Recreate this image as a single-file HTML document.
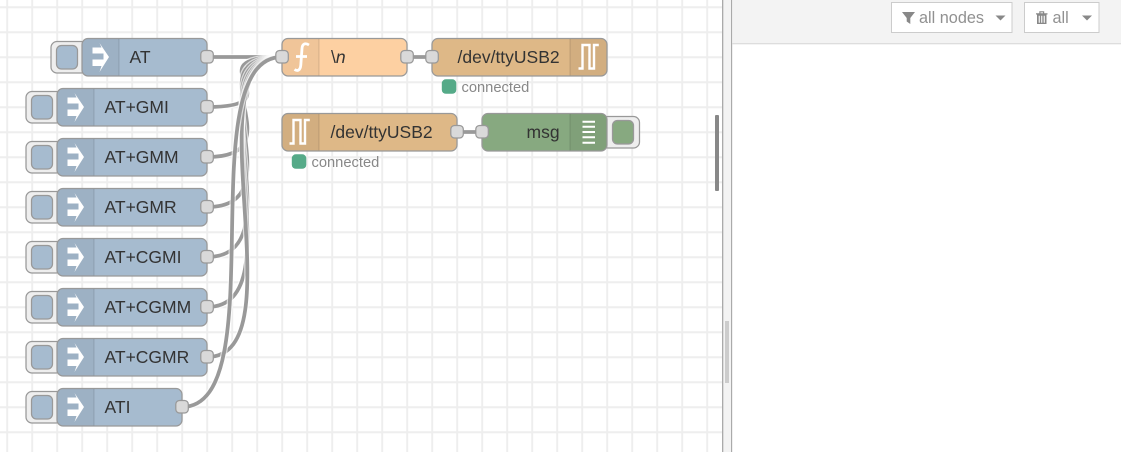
<!DOCTYPE html>
<html><head><meta charset="utf-8"><style>
html,body{margin:0;padding:0;background:#fff;width:1121px;height:452px;overflow:hidden}
svg{display:block;position:absolute;left:0;top:0}
text{font-family:"Liberation Sans",Arial,sans-serif}
.l{font-size:17.5px;fill:#333}
.s{font-size:14.7px;fill:#888}
.b{font-size:16.25px;fill:#919191}
.n{stroke:#999;stroke-width:1.25}
.p{fill:#d9d9d9;stroke:#999;stroke-width:1.25}
.ib{fill:#000;fill-opacity:.05}
.ic{stroke:#000;stroke-opacity:.1;stroke-width:1.25}
.o{fill:none;stroke:#fff;stroke-opacity:.65;stroke-width:6.25}
.w{fill:none;stroke:#999;stroke-width:3.75}
</style></head><body>
<svg width="1121" height="452" viewBox="0 0 1121 452" xmlns="http://www.w3.org/2000/svg">
<defs>
<pattern id="g" width="25" height="25" patternUnits="userSpaceOnUse" x="0" y="0">
<path d="M7.2 0V25M0 7.2H25" stroke="#eee" stroke-width="2" fill="none"/>
</pattern>
<g id="inj">
<path fill="#fff" d="M92.500 47.500H101.500L99.500 43L109 57L99.500 72L101.500 66H92.500V59.500H103.500V53.500H92.500Z"/>
</g>
<g id="btn">
<rect x="51" y="41.5" width="36" height="31.5" rx="6" fill="#eee" stroke="#999" stroke-width="1.25"/>
<rect x="56.5" y="45.5" width="21" height="23.5" rx="5" fill="#a6bbcf" stroke="#999" stroke-width="1.25"/>
</g>
<g id="hd">
<path class="ib" d="M88 39H119V75.5H88A5.5 5.5 0 0 1 82.5 70V44.500A5.500 5.500 0 0 1 88 39Z"/>
<path class="ic" d="M119 39V75.500"/>
<use href="#inj"/>
</g>
</defs>
<rect x="0" y="0" width="722" height="452" fill="#fff"/>
<rect x="0" y="0" width="722" height="452" fill="url(#g)"/>

<!-- wires -->
<g>
<path class="o" d="M207 57C301 57 188 57 282 57"/><path class="w" d="M207 57C301 57 188 57 282 57"/>
<path class="o" d="M207 107C301 107 188 57 282 57"/><path class="w" d="M207 107C301 107 188 57 282 57"/>
<path class="o" d="M207 157C301 157 188 57 282 57"/><path class="w" d="M207 157C301 157 188 57 282 57"/>
<path class="o" d="M207 207C301 207 188 57 282 57"/><path class="w" d="M207 207C301 207 188 57 282 57"/>
<path class="o" d="M207 257C301 257 188 57 282 57"/><path class="w" d="M207 257C301 257 188 57 282 57"/>
<path class="o" d="M207 307C301 307 188 57 282 57"/><path class="w" d="M207 307C301 307 188 57 282 57"/>
<path class="o" d="M207 357C301 357 188 57 282 57"/><path class="w" d="M207 357C301 357 188 57 282 57"/>
<path class="o" d="M182 407C276 407 188 57 282 57"/><path class="w" d="M182 407C276 407 188 57 282 57"/>
<path class="w" d="M407 57H432"/>
<path class="w" d="M457 132H482"/>
</g>

<!-- AT -->
<g>
<use href="#btn"/>
<rect class="n" x="82" y="38.5" width="125" height="37.5" rx="6" fill="#a6bbcf"/>
<use href="#hd"/>
<text class="l" x="129.500" y="63">AT</text>
<rect class="p" x="200.800" y="50.500" width="12.500" height="12.500" rx="3.750"/>
</g>
<g transform="translate(-25,50)">
<use href="#btn"/>
<rect class="n" x="82" y="38.5" width="150" height="37.5" rx="6" fill="#a6bbcf"/>
<use href="#hd"/>
<text class="l" x="129.500" y="63">AT+GMI</text>
<rect class="p" x="225.800" y="50.500" width="12.500" height="12.500" rx="3.750"/>
</g>
<g transform="translate(-25,100)">
<use href="#btn"/>
<rect class="n" x="82" y="38.5" width="150" height="37.5" rx="6" fill="#a6bbcf"/>
<use href="#hd"/>
<text class="l" x="129.500" y="63">AT+GMM</text>
<rect class="p" x="225.800" y="50.500" width="12.500" height="12.500" rx="3.750"/>
</g>
<g transform="translate(-25,150)">
<use href="#btn"/>
<rect class="n" x="82" y="38.5" width="150" height="37.5" rx="6" fill="#a6bbcf"/>
<use href="#hd"/>
<text class="l" x="129.500" y="63">AT+GMR</text>
<rect class="p" x="225.800" y="50.500" width="12.500" height="12.500" rx="3.750"/>
</g>
<g transform="translate(-25,200)">
<use href="#btn"/>
<rect class="n" x="82" y="38.5" width="150" height="37.5" rx="6" fill="#a6bbcf"/>
<use href="#hd"/>
<text class="l" x="129.500" y="63">AT+CGMI</text>
<rect class="p" x="225.800" y="50.500" width="12.500" height="12.500" rx="3.750"/>
</g>
<g transform="translate(-25,250)">
<use href="#btn"/>
<rect class="n" x="82" y="38.5" width="150" height="37.5" rx="6" fill="#a6bbcf"/>
<use href="#hd"/>
<text class="l" x="129.500" y="63">AT+CGMM</text>
<rect class="p" x="225.800" y="50.500" width="12.500" height="12.500" rx="3.750"/>
</g>
<g transform="translate(-25,300)">
<use href="#btn"/>
<rect class="n" x="82" y="38.5" width="150" height="37.5" rx="6" fill="#a6bbcf"/>
<use href="#hd"/>
<text class="l" x="129.500" y="63">AT+CGMR</text>
<rect class="p" x="225.800" y="50.500" width="12.500" height="12.500" rx="3.750"/>
</g>
<g transform="translate(-25,350)">
<use href="#btn"/>
<rect class="n" x="82" y="38.5" width="125" height="37.5" rx="6" fill="#a6bbcf"/>
<use href="#hd"/>
<text class="l" x="129.500" y="63">ATI</text>
<rect class="p" x="200.800" y="50.500" width="12.500" height="12.500" rx="3.750"/>
</g>

<!-- function -->
<rect class="n" x="282" y="38.500" width="125" height="37.500" rx="6" fill="#fdd0a2"/>
<path class="ib" d="M288 39H319V75.500H288A5.500 5.500 0 0 1 282.500 70V44.500A5.500 5.500 0 0 1 288 39Z"/>
<path class="ic" d="M319 39V75.500"/>
<path d="M309 45C305 42.500 302.300 44 302 48.500L300.800 65C300.300 70.500 297.500 71.500 294.500 69.500M296 56.500H307" fill="none" stroke="#fff" stroke-width="2.800"/>
<text class="l" x="331" y="63">\<tspan font-style="italic">n</tspan></text>
<rect class="p" x="275.800" y="50.500" width="12.500" height="12.500" rx="3.750"/>
<rect class="p" x="400.800" y="50.500" width="12.500" height="12.500" rx="3.750"/>

<!-- serial out -->
<rect class="n" x="432" y="38.500" width="175" height="37.500" rx="6" fill="#deb887"/>
<path class="ib" d="M570 39H601A5.500 5.500 0 0 1 606.500 44.500V70A5.500 5.500 0 0 1 601 75.500H570Z"/>
<path class="ic" d="M570 39V75.500"/>
<path d="M578.500 68.500H582.500V45H589.500V68.500H594V45H598.800" fill="none" stroke="#fff" stroke-width="2.400"/>
<text class="l" x="457.500" y="63">/dev/ttyUSB2</text>
<rect class="p" x="425.800" y="50.500" width="12.500" height="12.500" rx="3.750"/>
<rect x="441.800" y="79.300" width="14.500" height="14.500" rx="4" fill="#55aa88"/>
<text class="s" x="461.500" y="92">connected</text>

<!-- serial in -->
<rect class="n" x="282" y="113.500" width="175" height="37.500" rx="6" fill="#deb887"/>
<path class="ib" d="M288 114H319V150.500H288A5.500 5.500 0 0 1 282.500 145V119.500A5.500 5.500 0 0 1 288 114Z"/>
<path class="ic" d="M319 114V150.500"/>
<path d="M289.500 143.500H293.500V120H300.500V143.500H305V120H309.800" fill="none" stroke="#fff" stroke-width="2.400"/>
<text class="l" x="330.500" y="138">/dev/ttyUSB2</text>
<rect class="p" x="450.800" y="125.500" width="12.500" height="12.500" rx="3.750"/>
<rect x="291.800" y="154.300" width="14.500" height="14.500" rx="4" fill="#55aa88"/>
<text class="s" x="311.500" y="167">connected</text>

<!-- debug -->
<rect x="602" y="116.500" width="37.500" height="31.500" rx="6" fill="#eee" stroke="#999" stroke-width="1.25"/>
<rect x="612.500" y="120.500" width="21" height="23.500" rx="5" fill="#87a980" stroke="#999" stroke-width="1.25"/>
<rect class="n" x="482" y="113.500" width="125" height="37.500" rx="6" fill="#87a980"/>
<path class="ib" d="M570 114H601A5.500 5.500 0 0 1 606.500 119.500V145A5.500 5.500 0 0 1 601 150.500H570Z"/>
<path class="ic" d="M570 114V150.500"/>
<path d="M582.500 121.700H595M582.500 126.800H595M582.500 132H595M582.500 137.300H595M582.500 142.700H595" stroke="#fff" stroke-width="2" fill="none"/>
<text class="l" x="526.500" y="138">msg</text>
<rect class="p" x="475.800" y="125.500" width="12.500" height="12.500" rx="3.750"/>

<!-- scrollbar -->
<rect x="715" y="115" width="4" height="76" rx="1" fill="#888"/>

<!-- separator & sidebar -->
<rect x="722" y="0" width="10" height="452" fill="#f3f3f3"/>
<rect x="722" y="0" width="1.300" height="452" fill="#aaa"/>
<rect x="731" y="0" width="1.300" height="452" fill="#aaa"/>
<rect x="725" y="321" width="4" height="62" fill="#ccc"/>
<rect x="732.300" y="0" width="389" height="452" fill="#fff"/>
<rect x="732.300" y="0" width="389" height="43" fill="#f3f3f3"/>
<rect x="732.300" y="43" width="389" height="1.300" fill="#ddd"/>

<rect x="891.500" y="2.500" width="120.500" height="30" fill="#fff" stroke="#ccc" stroke-width="1"/>
<path d="M902 12H915L910.300 18V24L906.700 21.500V18Z" fill="#888"/>
<text class="b" x="919" y="23">all nodes</text>
<path d="M995.500 15.500H1005.500L1000.500 20.500Z" fill="#888"/>

<rect x="1024.500" y="2.500" width="74.500" height="30" fill="#fff" stroke="#ccc" stroke-width="1"/>
<path d="M1036 13.200H1047.500V14.500H1046.500V24H1037V14.500H1036ZM1039.300 13.200V11.300H1044.200V13.200H1043V12.400H1040.500V13.200ZM1038.700 15.800V22.700H1039.800V15.800ZM1041.200 15.800V22.700H1042.300V15.800ZM1043.700 15.800V22.700H1044.800V15.800Z" fill="#888" fill-rule="evenodd"/>
<text class="b" x="1052.500" y="23">all</text>
<path d="M1082 15.500H1092L1087 20.500Z" fill="#888"/>
</svg>
</body></html>
